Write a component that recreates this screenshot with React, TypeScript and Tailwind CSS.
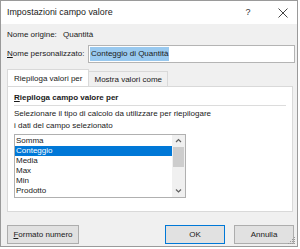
import React from "react";

const F = { fontFamily: '"Liberation Sans", Arial, sans-serif' };

export default function App() {
  const items = ["Somma", "Conteggio", "Media", "Max", "Min", "Prodotto"];
  return (
    <div className="w-[300px] h-[249px] bg-white overflow-hidden relative whitespace-nowrap" style={F}>
      <div className="w-[298px] h-[247px] border border-[#9a9a9a] bg-[#f0f0f0] flex flex-col relative">
        {/* title bar */}
        <div className="h-[23px] bg-white flex items-center pl-[6px] text-[8.9px] text-[#1a1a1a] shrink-0">
          <span className="flex-1">Impostazioni campo valore</span>
          <span className="w-[20px] text-center text-[9px] text-[#333] mr-[20px]">?</span>
          <svg width="10" height="10" viewBox="0 0 10 10" className="mr-[9px]">
            <path d="M0.5 0.5 L9.5 9.5 M9.5 0.5 L0.5 9.5" stroke="#444" strokeWidth="1" />
          </svg>
        </div>
        <div className="flex flex-col pl-[6px] pr-[4px] text-[8px] text-[#1a1a1a]">
          <div className="flex items-center h-[19px] mt-[1px]">
            <span className="w-[56px]">Nome origine:</span>
            <span>Quantità</span>
          </div>
          <div className="flex items-center h-[18px] mt-[1px] -mr-[2px]">
            <span className="w-[81px]"><span className="underline">N</span>ome personalizzato:</span>
            <div className="flex-1 h-[18px] bg-white border border-[#b4b4b4] flex items-center pl-[1px]">
              <span className="bg-[#99c9ef] px-[1px] leading-[14px]">Conteggio di Quantità</span>
            </div>
          </div>
          {/* tabs */}
          <div className="flex mt-[6px] h-[18px] items-end">
            <div className="h-[18px] px-[6px] bg-white border border-b-0 border-[#d9d9d9] flex items-center">Riepiloga valori per</div>
            <div className="h-[16px] px-[5px] bg-[#f0f0f0] border border-l-0 border-b-0 border-[#d9d9d9] flex items-center">Mostra valori come</div>
          </div>
          <div className="h-[126px] bg-white border border-[#d9d9d9] -mt-[1px] px-[6px] pt-[5px] flex flex-col">
            <div className="font-bold leading-[12px]"><span className="underline">R</span>iepiloga campo valore per</div>
            <div className="h-px bg-[#dcdcdc] mt-[1px]" />
            <div className="mt-[2px] leading-[12px]">Selezionare il tipo di calcolo da utilizzare per riepilogare</div>
            <div className="leading-[12px]">i dati del campo selezionato</div>
            <div className="mt-[2px] w-[172px] h-[64px] border border-[#b0b0b0] flex bg-white">
              <div className="flex-1 flex flex-col pt-[1px]">
                {items.map((it, i) => (
                  <div key={it} className={`h-[10px] leading-[10px] pl-[1px] ${i === 1 ? "bg-[#0078d7] text-white" : ""}`}>{it}</div>
                ))}
              </div>
              <div className="w-[13px] bg-[#f0f0f0] flex flex-col items-center">
                <svg width="13" height="12" viewBox="0 0 13 12"><path d="M4 7 L6.5 4.5 L9 7" stroke="#606060" strokeWidth="1.2" fill="none" /></svg>
                <div className="w-[11px] h-[20px] bg-[#cdcdcd]" />
                <div className="flex-1" />
                <svg width="13" height="12" viewBox="0 0 13 12"><path d="M4 4.5 L6.5 7 L9 4.5" stroke="#606060" strokeWidth="1.2" fill="none" /></svg>
              </div>
            </div>
          </div>
          {/* buttons */}
          <div className="flex items-center mt-[13px] -mr-[1px]">
            <div className="w-[72px] h-[19px] bg-[#e1e1e1] border border-[#adadad] flex items-center justify-center"><span><span className="underline">F</span>ormato numero</span></div>
            <div className="flex-1" />
            <div className="w-[60px] h-[19px] bg-[#e1e1e1] border border-[#0078d7] flex items-center justify-center">OK</div>
            <div className="w-[60px] h-[19px] bg-[#e1e1e1] border border-[#adadad] flex items-center justify-center ml-[9px]">Annulla</div>
          </div>
        </div>
        <svg width="8" height="8" viewBox="0 0 8 8" className="absolute right-[1px] bottom-[1px]">
          <rect x="6" y="0" width="1" height="1" fill="#999" />
          <rect x="4" y="2" width="1" height="1" fill="#999" />
          <rect x="6" y="2" width="1" height="1" fill="#999" />
          <rect x="2" y="4" width="1" height="1" fill="#999" />
          <rect x="4" y="4" width="1" height="1" fill="#999" />
          <rect x="6" y="4" width="1" height="1" fill="#999" />
          <rect x="0" y="6" width="1" height="1" fill="#999" />
          <rect x="2" y="6" width="1" height="1" fill="#999" />
          <rect x="4" y="6" width="1" height="1" fill="#999" />
          <rect x="6" y="6" width="1" height="1" fill="#999" />
        </svg>
      </div>
    </div>
  );
}
